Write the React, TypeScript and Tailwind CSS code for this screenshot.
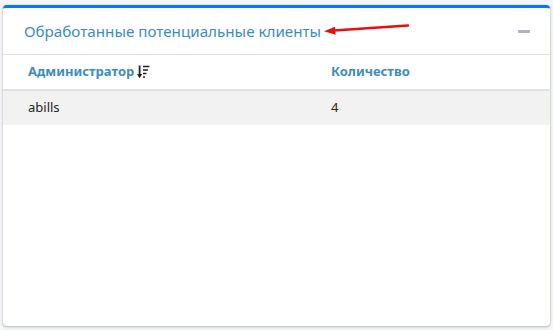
export default function App() {
  return (
    <div className="h-[330px] w-[553px] bg-[#f4f6f9] px-[3px] pt-[5px] pb-[4px] font-['Noto_Sans',sans-serif]">
      <div className="relative flex h-full flex-col rounded-[4px] border-t-[3px] border-[#007bff] bg-white shadow-[0_0_1px_rgba(0,0,0,0.25),0_1px_3px_rgba(0,0,0,0.25)]">
        <div className="flex h-[47px] items-center justify-between border-b border-[#e3e3e3] pl-[21px] pr-[20px]">
          <div className="flex items-center gap-[1px]">
            <h3 className="text-[15.2px] text-[#3c8dbc]">Обработанные потенциальные клиенты</h3>
            <svg width="90" height="20" viewBox="0 0 90 20" aria-hidden="true">
              <path d="M12 9.5L86 4.5" stroke="#e8100e" strokeWidth="2.4" strokeLinecap="round" />
              <path d="M2 10.3L13 5.8L13.6 13.8Z" fill="#e8100e" />
            </svg>
          </div>
          <div className="h-[3px] w-[12px] rounded-[1px] bg-[#adb5bd]" />
        </div>

        <table className="w-full border-collapse text-left text-[13px]">
          <thead>
            <tr className="border-b-2 border-[#dee2e6]">
              <th className="h-[35px] w-[303px] pl-[25px] font-bold text-[#3c8dbc]">
                <span className="inline-flex items-center gap-[3px]">
                  Администратор
                  <svg width="13" height="14" viewBox="0 0 13 14" aria-hidden="true">
                    <path d="M2.6 0.5V11.5" stroke="#222" strokeWidth="1.8" />
                    <path d="M0 9L2.6 13.2L5.2 9Z" fill="#222" />
                    <path d="M6 1.5H12.5M6 5H11M6 8.5H9.5M6 12H8" stroke="#222" strokeWidth="1.6" />
                  </svg>
                </span>
              </th>
              <th className="pl-[25px] font-bold text-[#3c8dbc]">Количество</th>
            </tr>
          </thead>
          <tbody>
            <tr className="bg-[#f2f2f2]">
              <td className="h-[35px] pl-[25px] text-[#212529]">abills</td>
              <td className="pl-[25px] text-[#212529]">4</td>
            </tr>
          </tbody>
        </table>
      </div>
    </div>
  );
}
